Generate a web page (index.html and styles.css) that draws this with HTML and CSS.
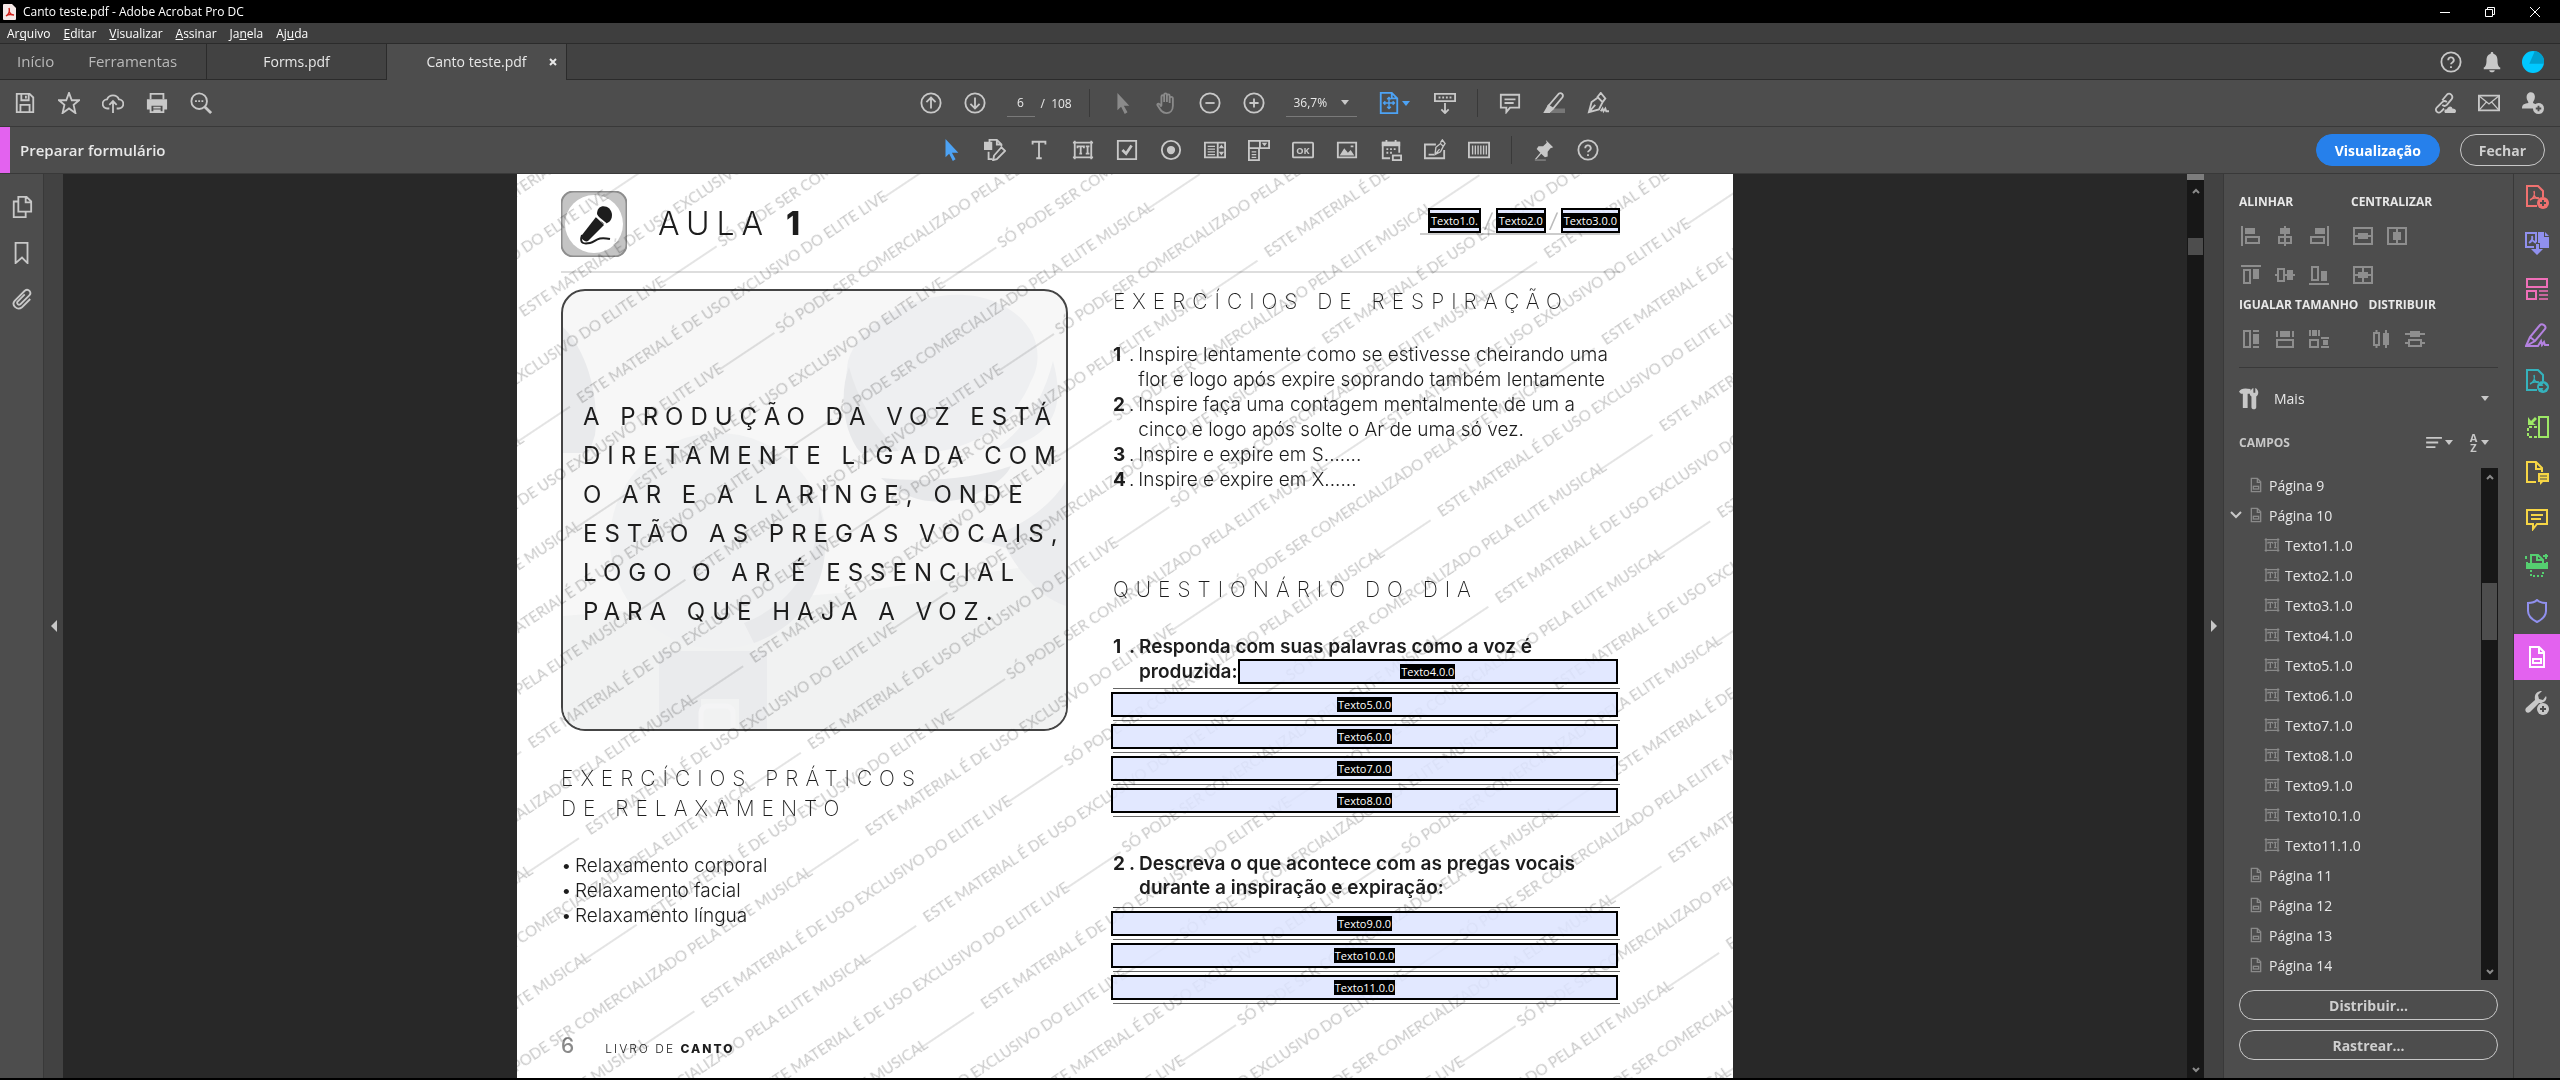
FILE: index.html
```html
<!DOCTYPE html>
<html lang="pt-BR">
<head>
  <meta charset="UTF-8">
  <title>Canto teste.pdf - Adobe Acrobat Pro DC</title>
  <link rel="stylesheet" href="styles.css">
</head>
<body>

  <svg class="sprite" aria-hidden="true">
    <symbol id="i-page" viewBox="0 0 24 24"><path d="M5 2h9l5 5v15H5zM14 2v6h5"/><rect x="8" y="14" width="8" height="4"/></symbol>
    <symbol id="i-text" viewBox="0 0 24 24"><path d="M3 4h18v16H3zM1 4h2M21 4h2M1 20h2M21 20h2M3 2v2M21 2v2M3 20v2M21 20v2M6 10V8h7v2M9.500 8v8M8 16h3M15 8h4M17 8v8M15 16h4"/></symbol>
    <symbol id="i-help" viewBox="0 0 24 24"><circle cx="12" cy="12" r="10.500"/><path d="M9 10a3 3 0 1 1 4.500 2.500c-1 .6-1.500 1-1.500 2M12 16.500v2"/></symbol>
    <symbol id="i-pdf" viewBox="0 0 24 24"><path d="M12 21H2V1h11l5 5v6"/><path stroke-width="1.500" d="M5 15c4-2 5-6 4-9M9 10c1 3 3 4 5 3M6 14c3-1 5-2 8-1"/></symbol>
    <symbol id="i-pen" viewBox="0 0 24 24"><path d="M2 22 5 11l7-5 5 5-4 8zM2 22l7-8M11 6l4-5 5 6-3 4M15 21l2-3 1 3 2-3 1 3h3"/></symbol>
    <symbol id="i-chat" viewBox="0 0 24 24"><path d="M2 3h20v14H12l-4 5v-5H2zM6 8h12M6 12h10"/></symbol>
  </svg>

  <div class="app">

    <header class="title-bar">
      <svg class="logo" viewBox="0 0 13 16"><path fill="#f6e9e8" d="M1 0h8l4 4v11a1 1 0 0 1-1 1H1a1 1 0 0 1-1-1V1a1 1 0 0 1 1-1z"/><path fill="none" stroke="#d3221b" stroke-width="1.400" d="M3 12c3-2 4-5 3-8M6 7c1 3 3 4 5 4M3 12c2-2 4-2 8-1"/></svg>
      <span>Canto teste.pdf - Adobe Acrobat Pro DC</span>
      <div class="window-buttons">
        <button aria-label="Minimizar"><svg viewBox="0 0 12 12"><path d="M1 6.500h10"/></svg></button>
        <button aria-label="Restaurar"><svg viewBox="0 0 12 12"><path d="M1.500 3.500h7v7h-7zM3.500 3.500v-2h7v7h-2"/></svg></button>
        <button aria-label="Fechar janela"><svg viewBox="0 0 12 12"><path d="m1 1 10 10M11 1 1 11"/></svg></button>
      </div>
    </header>

    <nav class="menu-bar">
      <a href="#">Ar<u>q</u>uivo</a>
      <a href="#"><u>E</u>ditar</a>
      <a href="#"><u>V</u>isualizar</a>
      <a href="#"><u>A</u>ssinar</a>
      <a href="#">Ja<u>n</u>ela</a>
      <a href="#">Aj<u>u</u>da</a>
    </nav>

    <div class="tab-bar">
      <div class="home-tabs">
        <a href="#">Início</a>
        <a href="#">Ferramentas</a>
      </div>
      <a class="tab" href="#">Forms.pdf</a>
      <div class="tab active"><a href="#">Canto teste.pdf</a><button class="tab-close" aria-label="Fechar guia"><svg viewBox="0 0 8 8"><path d="m1 1 6 6M7 1 1 7"/></svg></button></div>
      <div class="account">
        <button class="icon" aria-label="Ajuda"><svg><use href="#i-help"/></svg></button>
        <button class="icon" aria-label="Notificações"><svg viewBox="0 0 24 24"><path class="solid" stroke="none" d="M12 1c1 0 1.500.7 1.500 2C17 4 18 7 18 10c0 5 1 7 3 8v2H3v-2c2-1 3-3 3-8 0-3 1-6 4.500-7 0-1.300.5-2 1.500-2zM9 21h6c0 3-6 3-6 0z"/></svg></button>
        <button class="icon" aria-label="Conta"><svg viewBox="0 0 24 24"><circle cx="12" cy="12" r="12" fill="#00c8ff" stroke="none"/><path fill="#00a0cf" stroke="none" d="M8 14 14 0a12 12 0 0 1 10 14z"/></svg></button>
      </div>
    </div>

    <div class="toolbar">
      <div class="tools left">
        <button class="icon" aria-label="Salvar"><svg viewBox="0 0 24 24"><path d="M3 2h14l4 4v16H3zM8 2v7h8V2M13 4v3M7 22v-8h10v8"/></svg></button>
        <button class="icon" aria-label="Favorito"><svg viewBox="0 0 24 24"><path d="m12 1 3 8h8l-6 5 2 9-7-5-7 5 2-9-6-5h8z"/></svg></button>
        <button class="icon" aria-label="Enviar"><svg viewBox="0 0 24 24"><path d="M8 18H6a5 5 0 0 1-.5-10 7 7 0 0 1 13 0A5 5 0 0 1 18 18h-2M12 23V11M8 14l4-4 4 4"/></svg></button>
        <button class="icon" aria-label="Imprimir"><svg viewBox="0 0 24 24"><path d="M5 8V2h14v6"/><path class="solid" stroke="none" d="M1 8h22v11h-4v-5H5v5H1z"/><path d="M5 14h14v8H5zM8 17h8M8 20h8"/></svg></button>
        <button class="icon" aria-label="Localizar"><svg viewBox="0 0 24 24"><circle cx="10" cy="10" r="8.500"/><path stroke-width="3" d="m16 16 7 7"/><path d="M5.500 10h2M9 10h2M12.500 10h2"/></svg></button>
      </div>
      <div class="tools center main-tools">
        <button class="icon" aria-label="Página anterior"><svg viewBox="0 0 24 24"><circle cx="12" cy="12" r="10.500"/><path d="M12 18V6M7 11l5-5 5 5"/></svg></button>
        <button class="icon" aria-label="Próxima página"><svg viewBox="0 0 24 24"><circle cx="12" cy="12" r="10.500"/><path d="M12 6v12M7 13l5 5 5-5"/></svg></button>
        <input class="page-number" type="text" value="6" aria-label="Página">
        <span class="page-total">/&nbsp; 108</span>
        <span class="sep"></span>
        <button class="icon dim" aria-label="Selecionar"><svg viewBox="0 0 24 24"><path fill="#8a8a8a" stroke="none" d="M7 1v19l4-4 4 8 3-2-4-7h6z"/></svg></button>
        <button class="icon dim" aria-label="Mão"><svg viewBox="0 0 24 24"><path d="M7 15V5a1.500 1.500 0 0 1 3 0v6-8a1.500 1.500 0 0 1 3 0v8-7a1.500 1.500 0 0 1 3 0v8-5a1.500 1.500 0 0 1 3.500 0v8c0 5-3 8-7 8-5 0-7-4-10-9 0-2 2-2 4.500 2"/></svg></button>
        <button class="icon" aria-label="Menos zoom"><svg viewBox="0 0 24 24"><circle cx="12" cy="12" r="10.500"/><path d="M7 12h10"/></svg></button>
        <button class="icon" aria-label="Mais zoom"><svg viewBox="0 0 24 24"><circle cx="12" cy="12" r="10.500"/><path d="M7 12h10M12 7v10"/></svg></button>
        <span class="zoom-box"><select class="zoom" aria-label="Zoom"><option>36,7%</option></select><span class="caret"></span></span>
        <button class="icon fit" aria-label="Ajustar"><svg viewBox="0 0 24 24"><path d="M3 1h12l6 6v16H3zM15 1v6h6"/><path stroke-width="1.500" d="M12 6v12M6 12h12M10 8l2-2 2 2M10 16l2 2 2-2M8 10l-2 2 2 2M16 10l2 2-2 2"/></svg><span class="caret"></span></button>
        <button class="icon" aria-label="Rolagem"><svg viewBox="0 0 24 24"><path d="M1 2h22v8H1zM5 6h2M9 6h2M13 6h2M17 6h2M12 12v11M8 19l4 4 4-4"/></svg></button>
        <span class="sep"></span>
        <button class="icon" aria-label="Comentário"><svg><use href="#i-chat"/></svg></button>
        <button class="icon" aria-label="Realçar"><svg viewBox="0 0 24 24"><path fill="#777" stroke="none" d="M11 18h13v5H8z"/><path d="M6 15 17 2c3-2 6 1 4 4L11 18z"/><path class="solid" d="m6 15 4 4-3 3H2z"/></svg></button>
        <button class="icon" aria-label="Assinar"><svg><use href="#i-pen"/></svg></button>
      </div>
      <div class="tools right">
        <button class="icon" aria-label="Link"><svg viewBox="0 0 24 24"><path d="m9 9 5-6c3-3 8 1 5 5l-5 6c-2 2-4 1-5 0M14 11c-2-2-4-1-5 0l-6 6c-3 3 2 8 5 4l3-3"/><path class="solid" stroke="none" d="M12 23c-2-3 1-5 2-4 2-5 6-3 6-1 4 0 5 3 3 5z"/></svg></button>
        <button class="icon" aria-label="E-mail"><svg viewBox="0 0 24 24"><path d="M1 4h22v16H1z"/><path stroke-width="1.500" d="m1 4 11 9 11-9M1 20l8-9M23 20l-8-9"/></svg></button>
        <button class="icon" aria-label="Compartilhar"><svg viewBox="0 0 24 24"><path class="solid" stroke="none" d="M5 6c0-8 10-7 9 0 0 3-2 4-2 6l4 2-3 4H0c0-5 3-5 7-6 0-2-2-3-2-6z"/><circle class="solid" cx="18" cy="18" r="6" stroke="none"/><path stroke="#4d4d4d" d="M18 15v6M15 18h6"/></svg></button>
      </div>
    </div>

    <div class="toolbar form-bar">
      <h1 class="form-title">Preparar formulário</h1>
      <div class="tools center form-tools">
        <button class="icon" aria-label="Selecionar campo"><svg viewBox="0 0 24 24"><path fill="#4da3f5" stroke="none" d="M6 0v20l4-4 4 8 3-2-4-7h7z"/></svg></button>
        <button class="icon" aria-label="Editar"><svg viewBox="0 0 24 24"><path class="solid" d="M1 4h7v7H1z"/><path d="M6 4V1h8l5 5v2M14 1v5h5M5 14v8h4M11 18 19 9l4 4-9 9-4 1z"/></svg></button>
        <button class="icon" aria-label="Texto"><svg viewBox="0 0 24 24"><path d="M5 6V3h14v3M12 3v18M9 21h6"/></svg></button>
        <button class="icon" aria-label="Campo de texto"><svg><use href="#i-text"/></svg></button>
        <button class="icon" aria-label="Caixa de seleção"><svg viewBox="0 0 24 24"><path d="M2 2h20v20H2z"/><path stroke-width="3" d="m7 12 4 4 6-9"/></svg></button>
        <button class="icon" aria-label="Botão de opção"><svg viewBox="0 0 24 24"><circle cx="12" cy="12" r="10"/><circle class="solid" cx="12" cy="12" r="3.500"/></svg></button>
        <button class="icon" aria-label="Lista"><svg viewBox="0 0 24 24"><path d="M1 4h22v16H1zM15 4v16"/><path stroke-width="1.500" d="M4 8h8M4 11h8M4 14h8M4 17h8"/><path class="solid" stroke="none" d="m16 10 3-4 3 4zM16 14l3 4 3-4z"/></svg></button>
        <button class="icon" aria-label="Suspenso"><svg viewBox="0 0 24 24"><path d="M1 2h22v8H1zM13 2v8M1 10v13h11V10"/><path stroke-width="1.500" d="M4 14h5M4 17h5M4 20h5"/><path class="solid" stroke="none" d="m15 4 3 4 3-4z"/></svg></button>
        <button class="icon" aria-label="Botão"><svg viewBox="0 0 24 24"><rect x="1" y="4" width="22" height="16" rx="1"/><text x="12" y="16" text-anchor="middle" class="ok">OK</text></svg></button>
        <button class="icon" aria-label="Imagem"><svg viewBox="0 0 24 24"><path d="M2 4h20v16H2zM16 8h3"/><path class="solid" stroke="none" d="m4 18 5-8 4 5 3-3 4 6z"/></svg></button>
        <button class="icon" aria-label="Data"><svg viewBox="0 0 24 24"><path d="M11 21H3V4h18v11M7 1v3M17 1v3M7 11h2M11 11h2M15 11h2M7 15h2M11 15h2"/><path class="solid" d="M3 4h18v3H3z"/><rect x="14" y="18" width="9" height="5"/></svg></button>
        <button class="icon" aria-label="Assinatura"><svg viewBox="0 0 24 24"><path d="M13 6H1v15h21V12M5 17h6"/><path stroke-width="1.500" d="m12 17 1-8 5-4 3 3-3 6zM12 17l5-6M18 4l2-3 3 4-2 3"/></svg></button>
        <button class="icon" aria-label="Código de barras"><svg viewBox="0 0 24 24"><path d="M1 4h22v16H1z"/><path stroke-width="1.500" d="M5 7v10M8 7v10M11 7v10M14 7v10M17 7v10M20 7v10"/></svg></button>
        <span class="sep"></span>
        <button class="icon" aria-label="Fixar"><svg viewBox="0 0 24 24"><path class="solid" stroke="none" d="m14 1 8 8-3 1-3 4v5l-3 1-4-4-6 7-1-1 6-7-4-4 2-3 5 0 4-4z"/><path stroke="#777" d="M2 23h12"/></svg></button>
        <button class="icon" aria-label="Ajuda do formulário"><svg><use href="#i-help"/></svg></button>
      </div>
      <div class="form-actions">
        <button class="pill primary">Visualização</button>
        <button class="pill">Fechar</button>
      </div>
    </div>

    <main class="workspace">

      <aside class="left-rail">
        <button class="icon" aria-label="Miniaturas"><svg viewBox="0 0 24 24"><path d="M8 1h9l5 5v11H8zM16 1v6h6M8 6H3v17h13v-6"/></svg></button>
        <button class="icon" aria-label="Marcadores"><svg viewBox="0 0 24 24"><path d="M5 1h13v22l-6-6-7 6z"/></svg></button>
        <button class="icon" aria-label="Anexos"><svg viewBox="0 0 24 24"><path d="m21 12-9 9c-5 4-12-2-8-7L15 3c4-3 8 2 5 5L10 18c-2 1-4-1-3-3l8-8"/></svg></button>
      </aside>
      <button class="collapse" aria-label="Recolher painel esquerdo"><svg viewBox="0 0 6 12"><path d="M6 0v12L0 6z"/></svg></button>

      <section class="document">
        <article class="page">
          <header class="lesson-head">
            <svg class="mic" viewBox="0 0 66 66"><rect x="0.500" y="0.500" width="65" height="65" rx="12" fill="#c4c4c4" stroke="#8d8d8d"/><circle cx="33" cy="33" r="29" fill="#fff"/><g fill="#1d1d1d"><path d="m35 26 8 8-16 16c-3 2-8-3-6-6z"/><path d="M36 23c0-12 15-9 15 1 0 8-8 10-10 8z"/></g><path fill="none" stroke="#fff" d="m34 24 11 9"/><path fill="none" stroke="#1d1d1d" stroke-width="2" d="M21 44c-3 9 2 9 8 8s6-7 20-4"/></svg>
            <h2 class="lesson-title">AULA <b>1</b></h2>
            <div class="date-fields">
              <label class="field small"><span>Texto1.0.</span><input type="text"></label>
              <i>/</i>
              <label class="field small"><span>Texto2.0</span><input type="text"></label>
              <i>/</i>
              <label class="field small"><span>Texto3.0.0</span><input type="text"></label>
            </div>
          </header>

          <div class="columns">
            <div class="column">
              <div class="quote">
                <svg class="quote-art" viewBox="0 0 503 438" preserveAspectRatio="none">
                  <path fill="#f1f2f2" d="M0 325 300 300 503 270V438H0z"/>
                  <path fill="#e9eaec" d="M0 36c28 28 36 78 32 108l-6 18H0z"/>
                  <circle cx="155" cy="250" r="108" fill="#f0f1f2"/>
                  <path fill="#e8e9eb" d="M256 215c18 60-5 115-65 137l-10-20c50-20 75-60 75-117z"/>
                  <path fill="#eeeff1" d="M285 70C300 20 380-10 430 10s50 60 38 80c-15 40-60 75-122 72-40-10-70-40-61-92z"/>
                  <path fill="#e7e8ea" d="M286 76c8 30 25 60 50 84l-38 2c-18-20-22-60-12-86zM318 187c50 5 95 0 130-12-10 24-80 60-130 12z"/>
                  <path fill="#edeef0" d="M490 70c14 50-2 80-60 90 30-20 50-50 60-90z"/>
                  <path fill="#ebecee" d="M415 250c35-10 70-30 88-60v125c-30-10-50-40-60-58z"/>
                  <path fill="#eaebed" d="M96 360h108v78h-28v-30h-38v30H96z"/>
                  <path fill="none" stroke="#f4f4f5" stroke-width="5" d="M138 438v-15q0-8 8-8h16q8 0 8 8v15"/>
                </svg>
                <p>A PRODUÇÃO DA VOZ ESTÁ<br>DIRETAMENTE LIGADA COM<br>O AR E A LARINGE, ONDE<br>ESTÃO AS PREGAS VOCAIS,<br>LOGO O AR É ESSENCIAL<br>PARA QUE HAJA A VOZ.</p>
              </div>
              <h3 class="heading relax-heading">EXERCÍCIOS PRÁTICOS<br>DE RELAXAMENTO</h3>
              <ul class="bullets">
                <li>Relaxamento corporal</li>
                <li>Relaxamento facial</li>
                <li>Relaxamento língua</li>
              </ul>
            </div>

            <div class="column">
              <h3 class="heading">EXERCÍCIOS DE RESPIRAÇÃO</h3>
              <ol class="steps">
                <li><b>1</b> . <span>Inspire lentamente como se estivesse cheirando uma<br>flor e logo após expire soprando também lentamente</span></li>
                <li><b>2</b> . <span>Inspire faça uma contagem mentalmente de um a<br>cinco e logo após solte o Ar de uma só vez.</span></li>
                <li><b>3</b> . <span>Inspire e expire em S.......</span></li>
                <li><b>4</b> . <span>Inspire e expire em X......</span></li>
              </ol>

              <h3 class="heading quiz-heading">QUESTIONÁRIO DO DIA</h3>
              <p class="question"><b>1</b> . <span>Responda com suas palavras como a voz é</span></p>
              <div class="answer first"><span>produzida:</span><label class="field"><span>Texto4.0.0</span><input type="text"></label></div>
              <div class="answer"><label class="field"><span>Texto5.0.0</span><input type="text"></label></div>
              <div class="answer"><label class="field"><span>Texto6.0.0</span><input type="text"></label></div>
              <div class="answer"><label class="field"><span>Texto7.0.0</span><input type="text"></label></div>
              <div class="answer"><label class="field"><span>Texto8.0.0</span><input type="text"></label></div>

              <p class="question second"><b>2</b> . <span>Descreva o que acontece com as pregas vocais<br>durante a inspiração e expiração:</span></p>
              <div class="answer"><label class="field"><span>Texto9.0.0</span><input type="text"></label></div>
              <div class="answer"><label class="field"><span>Texto10.0.0</span><input type="text"></label></div>
              <div class="answer"><label class="field"><span>Texto11.0.0</span><input type="text"></label></div>
            </div>
          </div>

          <footer class="page-foot"><span class="folio">6</span><span>LIVRO DE <b>CANTO</b></span></footer>

          <svg class="watermark">
            <defs>
              <pattern id="mark" width="885" height="104" patternUnits="userSpaceOnUse" patternTransform="rotate(-33.700) translate(-74 105)">
                <text x="0" y="18">ESTE MATERIAL É DE USO EXCLUSIVO DO ELITE LIVE</text>
                <path d="M366 14h66M806 14h68M134 66h66M574 66h68"/>
                <text x="436" y="18">SÓ PODE SER COMERCIALIZADO PELA ELITE MUSICAL</text>
                <text x="-232" y="70">ESTE MATERIAL É DE USO EXCLUSIVO DO ELITE LIVE</text>
                <text x="204" y="70">SÓ PODE SER COMERCIALIZADO PELA ELITE MUSICAL</text>
                <text x="653" y="70">ESTE MATERIAL É DE USO EXCLUSIVO DO ELITE LIVE</text>
              </pattern>
            </defs>
            <rect width="100%" height="100%" fill="url(#mark)"/>
          </svg>
        </article>
      </section>

      <div class="scrollbar doc-scroll">
        <span class="split"></span>
        <svg viewBox="0 0 8 6"><path d="m1 5 3-3 3 3"/></svg>
        <span class="thumb"></span>
        <svg class="down" viewBox="0 0 8 6"><path d="m1 1 3 3 3-3"/></svg>
      </div>
      <button class="collapse" aria-label="Recolher painel direito"><svg viewBox="0 0 6 12"><path d="M0 0v12l6-6z"/></svg></button>

      <aside class="panel">
        <div class="arrange">
          <section>
            <h2>ALINHAR</h2>
            <div class="arrange-icons">
              <svg viewBox="0 0 20 20"><path d="M1 0v20M5 11h13v6H5z"/><path class="grey" d="M4 2h10v6H4z"/></svg>
              <svg viewBox="0 0 20 20"><path d="M10 0v20M4 11h12v6H4z"/><path class="grey" d="M5 2h10v6H5z"/></svg>
              <svg viewBox="0 0 20 20"><path d="M19 0v20M2 11h13v6H2z"/><path class="grey" d="M6 2h10v6H6z"/></svg>
              <svg viewBox="0 0 20 20"><path d="M0 1h20M3 5h6v13H3z"/><path class="grey" d="M12 4h6v10h-6z"/></svg>
              <svg viewBox="0 0 20 20"><path d="M0 10h3M9 10h11M3 4h6v12H3z"/><path class="grey" d="M12 5h6v10h-6z"/></svg>
              <svg viewBox="0 0 20 20"><path d="M0 19h20M3 2h6v13H3z"/><path class="grey" d="M12 6h6v10h-6z"/></svg>
            </div>
          </section>
          <section>
            <h2>CENTRALIZAR</h2>
            <div class="arrange-icons two">
              <svg viewBox="0 0 20 20"><path d="M1 2h18v16H1zM1 10h18"/><path class="grey" d="M5 7h10v6H5z"/></svg>
              <svg viewBox="0 0 20 20"><path d="M1 2h18v16H1zM10 2v16"/><path class="grey" d="M6 6h8v8H6z"/></svg>
              <svg viewBox="0 0 20 20"><path d="M1 2h18v16H1zM10 2v16M1 10h18"/><path class="grey" d="M5 7h10v6H5z"/></svg>
            </div>
          </section>
        </div>
        <div class="arrange size-row">
          <section>
            <h2>IGUALAR TAMANHO</h2>
            <div class="arrange-icons">
              <svg viewBox="0 0 20 20"><path d="M3 2h6v16H3zM12 2h6M12 18h6"/><path class="grey" d="M12 5h6v10h-6z"/></svg>
              <svg viewBox="0 0 20 20"><path d="M2 11h16v7H2zM2 2v6M18 2v6"/><path class="grey" d="M5 2h10v6H5z"/></svg>
              <svg viewBox="0 0 20 20"><path d="M1 11h8v7H1zM1 1v6M10 1v6M12 9h8M12 18h8"/><path class="grey" d="M3 1h5v6H3zM14 11h5v5h-5z"/></svg>
            </div>
          </section>
          <section>
            <h2>DISTRIBUIR</h2>
            <div class="arrange-icons two">
              <svg viewBox="0 0 20 20"><path d="M3 4h5v12H3zM5.500 1v3M5.500 16v3M15 1v18"/><path class="grey" d="M12 4h6v12h-6z"/></svg>
              <svg viewBox="0 0 20 20"><path d="M0 5h20M4 11h12v6H4zM0 14h4M16 14h4"/><path class="grey" d="M5 2h10v6H5z"/></svg>
            </div>
          </section>
        </div>

        <button class="more">
          <svg viewBox="0 0 24 24"><path class="solid" stroke="none" d="M0 5c2-4 6-4 12-3v5H9v15H4V7H2zM15 1v5h2V1c4 2 4 7 1 9v11c0 3-5 3-5 0V10c-3-2-2-7 2-9z"/></svg>
          <span>Mais</span><span class="caret"></span>
        </button>

        <div class="fields-head">
          <h2>CAMPOS</h2>
          <button aria-label="Ordenar"><svg viewBox="0 0 18 14"><path d="M0 2h17M0 7h13M0 12h10"/></svg><span class="caret"></span></button>
          <button aria-label="Ordem alfabética"><span class="az">A<br>Z</span><span class="caret"></span></button>
        </div>

        <div class="field-list">
          <ul>
            <li><svg class="page-ico"><use href="#i-page"/></svg>Página 9</li>
            <li class="open"><svg class="chevron" viewBox="0 0 12 8"><path d="m1 1 5 5 5-5"/></svg><svg class="page-ico"><use href="#i-page"/></svg>Página 10</li>
            <li class="child"><svg><use href="#i-text"/></svg>Texto1.1.0</li>
            <li class="child"><svg><use href="#i-text"/></svg>Texto2.1.0</li>
            <li class="child"><svg><use href="#i-text"/></svg>Texto3.1.0</li>
            <li class="child"><svg><use href="#i-text"/></svg>Texto4.1.0</li>
            <li class="child"><svg><use href="#i-text"/></svg>Texto5.1.0</li>
            <li class="child"><svg><use href="#i-text"/></svg>Texto6.1.0</li>
            <li class="child"><svg><use href="#i-text"/></svg>Texto7.1.0</li>
            <li class="child"><svg><use href="#i-text"/></svg>Texto8.1.0</li>
            <li class="child"><svg><use href="#i-text"/></svg>Texto9.1.0</li>
            <li class="child"><svg><use href="#i-text"/></svg>Texto10.1.0</li>
            <li class="child"><svg><use href="#i-text"/></svg>Texto11.1.0</li>
            <li><svg class="page-ico"><use href="#i-page"/></svg>Página 11</li>
            <li><svg class="page-ico"><use href="#i-page"/></svg>Página 12</li>
            <li><svg class="page-ico"><use href="#i-page"/></svg>Página 13</li>
            <li><svg class="page-ico"><use href="#i-page"/></svg>Página 14</li>
          </ul>
          <div class="scrollbar list-scroll">
            <svg viewBox="0 0 8 6"><path d="m1 5 3-3 3 3"/></svg>
            <span class="thumb"></span>
            <svg class="down" viewBox="0 0 8 6"><path d="m1 1 3 3 3-3"/></svg>
          </div>
        </div>

        <div class="panel-actions">
          <button class="pill">Distribuir...</button>
          <button class="pill">Rastrear...</button>
        </div>
      </aside>

      <aside class="right-rail">
        <button class="icon red" aria-label="Criar PDF"><svg viewBox="0 0 24 24"><use href="#i-pdf"/><circle class="solid" cx="18" cy="18" r="6" stroke="none"/><path stroke="#4d4d4d" d="M18 15v6M15 18h6"/></svg></button>
        <button class="icon violet" aria-label="Combinar"><svg viewBox="0 0 24 24"><path d="M9 16H1V2h10v9M4 12c3-2 4-4 3-7M7 9l4 3"/><path class="solid" stroke="none" d="M13 1h6v5h5v11h-9v-5h-2zM20 1l4 4h-4zM11 13h3v5h4l-6 6-6-6h5z"/></svg></button>
        <button class="icon pink" aria-label="Organizar"><svg viewBox="0 0 24 24"><path d="M2 2h20v8H2zM2 14h9v8H2z"/><path stroke-width="1.500" d="M14 14h9M14 18h9M14 22h9"/></svg></button>
        <button class="icon purple" aria-label="Preencher e assinar"><svg viewBox="0 0 24 24"><path d="m1 23 4-9L15 2c2-2 7 1 5 4L10 18zM5 14l5 4M1 23h12l3-5 1 4 2-3 1 3h4"/></svg></button>
        <button class="icon teal" aria-label="Exportar"><svg viewBox="0 0 24 24"><use href="#i-pdf"/><circle class="solid" cx="18" cy="18" r="6" stroke="none"/><path stroke="#4d4d4d" d="M14 18h7M18 15l3 3-3 3"/></svg></button>
        <button class="icon lime" aria-label="Editar páginas"><svg viewBox="0 0 24 24"><path d="M14 2h9v20h-9z"/><path stroke-dasharray="3 2" d="M12 12H3v10h10"/><path class="solid" stroke="none" d="M3 2v8h8L8 8l4-4-2-2-4 4z"/></svg></button>
        <button class="icon yellow" aria-label="Enviar para comentários"><svg viewBox="0 0 24 24"><path d="M11 21H2V1h9l6 6v4M11 1v7h6"/><path class="solid" stroke="none" d="M13 12h11v9h-6l-3 3v-3h-2z"/><path stroke="#4d4d4d" stroke-width="1" d="M15 15h7M15 18h7"/></svg></button>
        <button class="icon yellow" aria-label="Comentar"><svg><use href="#i-chat"/></svg></button>
        <button class="icon green" aria-label="Digitalizar"><svg viewBox="0 0 24 24"><path d="M6 10V2h7l5 5v3M12 2v5h5M2 9v6h20V9M1 3v3M21 1v5M18 3h5"/><path class="solid" d="M2 11h20v3H2z"/><path stroke-dasharray="2 2" d="M6 17v6h12v-6"/></svg></button>
        <button class="icon violet" aria-label="Proteger"><svg viewBox="0 0 24 24"><path d="M12 1c3 3 6 3 9 3v8c0 6-5 9-9 11-4-2-9-5-9-11V4c3 0 6 0 9-3z"/></svg></button>
        <button class="icon current" aria-label="Preparar formulário"><svg><use href="#i-page"/></svg></button>
        <button class="icon" aria-label="Mais ferramentas"><svg viewBox="0 0 24 24"><path class="solid" stroke="none" d="M17 0 13 4l1 4 4 1 3-4c2 4-3 8-7 7L5 21c-3 2-6-1-4-4l9-8C9 3 12 0 17 0z"/><circle class="solid" cx="18" cy="18" r="6" stroke="none"/><path stroke="#4d4d4d" d="M18 15v6M15 18h6"/></svg></button>
      </aside>

    </main>
  </div>

</body>
</html>
```
FILE: styles.css
```css
* {
  box-sizing: border-box;
}
body {
  margin: 0;
  font-family: "Open Sans", "Noto Sans", sans-serif;
  font-size: 14px;
  color: #e8e8e8;
  background: #000;
}
h1, h2, h3, p, ul, ol {
  margin: 0;
  padding: 0;
}
ul, ol {
  list-style: none;
}
a {
  color: inherit;
  text-decoration: none;
}
button, input, select {
  font: inherit;
  color: inherit;
  background: none;
  border: none;
  padding: 0;
}
button {
  cursor: pointer;
}
svg {
  display: block;
  fill: none;
  stroke: currentColor;
  stroke-width: 2;
}
.sprite {
  position: absolute;
  width: 0;
  height: 0;
}
.solid {
  fill: currentColor;
}
.app {
  display: flex;
  flex-direction: column;
  height: 100vh;
  padding-bottom: 2px;
}

/* title, menu and tabs */
.title-bar {
  display: flex;
  align-items: center;
  gap: 7px;
  height: 23px;
  padding: 0 3px;
  background: #000;
  color: #fff;
  font-size: 12px;
}
.logo {
  width: 13px;
  height: 16px;
  stroke: none;
}
.window-buttons {
  display: flex;
  margin-left: auto;
}
.window-buttons button {
  width: 45px;
  display: flex;
  justify-content: center;
}
.window-buttons svg {
  width: 12px;
  height: 12px;
  stroke-width: 1;
}
.menu-bar {
  display: flex;
  align-items: center;
  gap: 13px;
  height: 20px;
  padding: 0 7px;
  background: #3e3e3e;
  color: #fff;
  font-size: 12px;
}
.tab-bar {
  display: flex;
  height: 37px;
  background: #424242;
  border-top: 1px solid #2b2b2b;
  border-bottom: 1px solid #2b2b2b;
  line-height: 35px;
}
.home-tabs {
  display: flex;
  gap: 34px;
  width: 207px;
  padding-left: 17px;
  border-right: 1px solid #2b2b2b;
  color: #b9b9b9;
  font-size: 15px;
}
.tab {
  position: relative;
  width: 180px;
  text-align: center;
  border-right: 1px solid #2b2b2b;
}
.tab.active {
  height: 36px;
  background: #4d4d4d;
}
.tab-close {
  position: absolute;
  right: 9px;
  top: 14px;
}
.tab-close svg {
  width: 8px;
  height: 8px;
}
.account {
  display: flex;
  margin-left: auto;
  padding-right: 7px;
}
.account .icon {
  width: 41px;
}

/* toolbars */
.icon {
  display: flex;
  align-items: center;
  justify-content: center;
  width: 44px;
  height: 100%;
  color: #c8c8c8;
}
.icon svg {
  width: 22px;
  height: 22px;
}
.dim {
  color: #8a8a8a;
}
.toolbar {
  display: grid;
  grid-template-columns: 1fr auto 1fr;
  align-items: center;
  height: 47px;
  background: #4d4d4d;
  border-bottom: 1px solid #393939;
}
.tools {
  display: flex;
  align-items: center;
  height: 46px;
}
.left {
  padding-left: 3px;
}
.right {
  justify-content: flex-end;
  padding-right: 5px;
}
.main-tools {
  margin-right: 32px;
}
.form-tools {
  margin-right: 22px;
}
.sep {
  width: 1px;
  height: 28px;
  margin: 0 10px;
  background: #393939;
}
.page-number {
  width: 28px;
  height: 28px;
  margin: 0 6px 0 10px;
  text-align: center;
  border-bottom: 1px solid #7a7a7a;
  font-size: 12px;
}
.page-total {
  width: 38px;
  font-size: 12px;
}
.zoom-box {
  display: flex;
  align-items: center;
  width: 71px;
  height: 28px;
  margin: 0 9px 0 10px;
  padding: 0 8px;
  border-bottom: 1px solid #7a7a7a;
}
.zoom {
  flex: 1;
  appearance: none;
  font-size: 12px;
}
.caret {
  border: 4px solid transparent;
  border-top: 5px solid #c8c8c8;
  border-bottom: 0;
}
.fit {
  width: 57px;
  gap: 2px;
  color: #4da3f5;
}
.fit .caret {
  border-top-color: #4da3f5;
}
.ok {
  fill: currentColor;
  stroke: none;
  font: bold 10px "Open Sans", sans-serif;
}
.form-title {
  height: 46px;
  padding-left: 10px;
  border-left: 10px solid #e362ef;
  font-size: 15px;
  line-height: 46px;
  font-weight: 600;
}
.form-actions {
  display: flex;
  justify-content: flex-end;
  gap: 20px;
  padding-right: 15px;
}
.pill {
  height: 32px;
  padding: 0 18px;
  border: 1px solid #c8c8c8;
  border-radius: 16px;
  color: #cfcfcf;
  font-weight: 700;
}
.primary {
  background: #2680eb;
  border-color: #2680eb;
  color: #fff;
}

/* workspace */
.workspace {
  flex: 1;
  display: flex;
  min-height: 0;
}
.left-rail {
  width: 44px;
  padding-top: 10px;
  background: #4d4d4d;
  border-right: 1px solid #393939;
}
.left-rail .icon {
  height: 46px;
}
.collapse {
  width: 19px;
  background: #424242;
  display: flex;
  align-items: center;
  justify-content: center;
}
.collapse svg {
  width: 6px;
  height: 12px;
  stroke: none;
  fill: #c8c8c8;
}
.document {
  flex: 1;
  background: #282828;
  overflow: hidden;
}
.scrollbar {
  display: flex;
  flex-direction: column;
  align-items: center;
  width: 17px;
  background: #171717;
  color: #8a8a8a;
}
.scrollbar svg {
  width: 8px;
  height: 6px;
}
.scrollbar .thumb {
  width: 15px;
  background: #4d4d4d;
}
.scrollbar .down {
  margin-top: auto;
  margin-bottom: 5px;
}
.split {
  width: 100%;
  height: 6px;
  margin-bottom: 8px;
  background: #7d7d7d;
}
.doc-scroll .thumb {
  height: 17px;
  margin-top: 44px;
}

/* pdf page */
.page {
  position: relative;
  display: flex;
  flex-direction: column;
  width: 57.25%;
  height: 100%;
  margin: 0 auto;
  padding: 16px 113px 20px 44px;
  background: #fff;
  color: #1d1d1d;
  font-family: Inter, sans-serif;
  overflow: hidden;
}
.watermark {
  position: absolute;
  inset: 0;
  width: 100%;
  height: 100%;
  pointer-events: none;
  stroke: none;
  mix-blend-mode: multiply;
}
.watermark text {
  fill: #c9c9c9;
  font: 15px Lato, sans-serif;
}
.watermark path {
  stroke: #c9c9c9;
  stroke-width: 1;
}
.lesson-head {
  display: flex;
  align-items: center;
  height: 83px;
  padding-bottom: 14px;
  border-bottom: 2px solid #ddd;
}
.mic {
  width: 66px;
  height: 66px;
  stroke: none;
}
.lesson-title {
  margin-left: 31px;
  font-size: 32px;
  font-weight: 300;
  letter-spacing: 7px;
}
.lesson-title b {
  font-weight: 800;
}
.date-fields {
  display: flex;
  align-items: flex-end;
  margin-left: auto;
  margin-bottom: 4px;
  border-bottom: 2px solid #ccc;
  padding-left: 8px;
}
.date-fields i {
  width: 15px;
  text-align: center;
  color: #bbb;
  font-size: 20px;
  line-height: 24px;
}
.columns {
  display: grid;
  grid-template-columns: 1fr 1fr;
  gap: 45px;
  margin-top: 14px;
}
.column {
  min-width: 0;
}
.quote {
  position: relative;
  display: flex;
  align-items: center;
  height: 442px;
  margin-top: 2px;
  padding: 8px 0 0 20px;
  border: 2px solid #444;
  border-radius: 24px;
  background: #f7f7f7;
  overflow: hidden;
}
.quote-art {
  position: absolute;
  inset: 0;
  width: 100%;
  height: 100%;
  stroke: none;
}
.quote p {
  position: relative;
  font-size: 24px;
  line-height: 39px;
  letter-spacing: 7px;
  white-space: nowrap;
}
.heading {
  font-size: 21px;
  line-height: 30px;
  font-weight: 200;
  letter-spacing: 7px;
  white-space: nowrap;
}
.relax-heading {
  margin-top: 33px;
}
.bullets {
  margin-top: 29px;
  font-size: 19px;
  line-height: 25px;
  font-weight: 300;
}
.bullets li::before {
  content: "•";
  display: inline-block;
  width: 14px;
}
.steps {
  margin-top: 25px;
  font-size: 19px;
  line-height: 25px;
  font-weight: 300;
}
.steps li, .question {
  display: flex;
  gap: 4px;
  white-space: nowrap;
}
.steps b, .question b {
  width: 12px;
  font-weight: 700;
}
.quiz-heading {
  margin: 83px 0 30px;
}
.question, .answer {
  font-size: 19px;
  line-height: 24px;
  font-weight: 600;
}
.second {
  margin-top: 35px;
  padding-bottom: 7px;
  border-bottom: 1px solid #444;
}
.answer {
  display: flex;
  align-items: center;
  height: 32px;
  padding-right: 2px;
  border-bottom: 1px solid #666;
}
.answer.first {
  height: 30px;
  padding-left: 26px;
  padding-bottom: 4px;
}
.field {
  position: relative;
  z-index: 1;
  flex: 1;
  display: flex;
  align-items: center;
  justify-content: center;
  height: 25px;
  margin-left: -2px;
  border: 2px solid #000;
  background: rgba(221, 228, 255, 0.85);
}
.answer.first .field {
  margin-left: 0;
}
.field span {
  padding: 0 1px;
  background: #000;
  color: #fff;
  font: 11px/15px "Open Sans", sans-serif;
}
.field input {
  position: absolute;
  inset: 0;
  width: 100%;
}
.small {
  flex: none;
  margin-left: 0;
}
.page-foot {
  display: flex;
  align-items: baseline;
  gap: 31px;
  margin-top: auto;
  font-size: 12px;
  font-weight: 300;
  letter-spacing: 2px;
}
.page-foot b {
  font-weight: 800;
}
.folio {
  color: #8a8a8a;
  font-size: 21px;
  font-weight: 500;
  letter-spacing: 0;
}

/* field panel */
.panel {
  display: flex;
  flex-direction: column;
  width: 291px;
  padding: 18px 15px;
  background: #4d4d4d;
  border-left: 1px solid #393939;
  border-right: 1px solid #393939;
}
.panel h2 {
  font-size: 12px;
  line-height: 20px;
  font-weight: 700;
}
.arrange {
  display: flex;
  height: 103px;
}
.arrange section {
  width: 112px;
}
.arrange-icons {
  display: grid;
  grid-template-columns: repeat(3, 20px);
  gap: 19px 14px;
  margin: 14px 0 0 2px;
}
.arrange-icons.two {
  grid-template-columns: repeat(2, 20px);
}
.arrange svg {
  width: 20px;
  height: 20px;
  color: #8e8e8e;
}
.grey {
  fill: #8e8e8e;
  stroke: none;
}
.size-row {
  height: 73px;
  border-bottom: 1px solid #393939;
}
.size-row section {
  width: 135px;
}
.more {
  display: flex;
  align-items: center;
  gap: 12px;
  height: 24px;
  margin-top: 18px;
  padding-right: 9px;
}
.more svg {
  width: 23px;
  height: 23px;
  color: #c8c8c8;
}
.more .caret {
  margin-left: auto;
}
.fields-head {
  display: flex;
  align-items: center;
  gap: 15px;
  height: 58px;
  padding: 7px 9px 0 0;
  color: #c8c8c8;
}
.fields-head h2 {
  margin-right: auto;
}
.fields-head button {
  display: flex;
  align-items: center;
  gap: 2px;
}
.fields-head svg {
  width: 17px;
  height: 13px;
}
.az {
  width: 11px;
  font-size: 11px;
  line-height: 10px;
  font-weight: 700;
}
.field-list {
  flex: 1;
  display: flex;
  justify-content: space-between;
  min-height: 0;
}
.field-list ul {
  padding-top: 2px;
}
.field-list li {
  display: flex;
  align-items: center;
  height: 30px;
  padding-left: 9px;
  gap: 5px;
}
.field-list li.open {
  padding-left: 0;
  margin-left: -10px;
}
.chevron {
  width: 14px;
  height: 8px;
  color: #c8c8c8;
}
.field-list .child {
  padding-left: 25px;
}
.child svg, .page-ico {
  width: 16px;
  height: 16px;
  color: #8a8a8a;
}
.list-scroll {
  padding-top: 6px;
}
.list-scroll .thumb {
  height: 57px;
  margin-top: 103px;
}
.panel-actions {
  display: flex;
  flex-direction: column;
  gap: 10px;
  padding-top: 10px;
}
.panel-actions .pill {
  height: 30px;
}

/* tools rail */
.right-rail {
  width: 46px;
  background: #4d4d4d;
}
.right-rail .icon {
  width: 46px;
  height: 46px;
}
.right-rail .icon svg {
  width: 24px;
  height: 24px;
}
.right-rail .red { color: #f0716f; }
.right-rail .violet { color: #9090ee; }
.right-rail .pink { color: #ef6fb8; }
.right-rail .purple { color: #b482e0; }
.right-rail .teal { color: #35b2bc; }
.right-rail .lime { color: #9de866; }
.right-rail .yellow { color: #f6d545; }
.right-rail .green { color: #55cf70; }
.right-rail .current {
  background: #e362ef;
  color: #fff;
}
```
